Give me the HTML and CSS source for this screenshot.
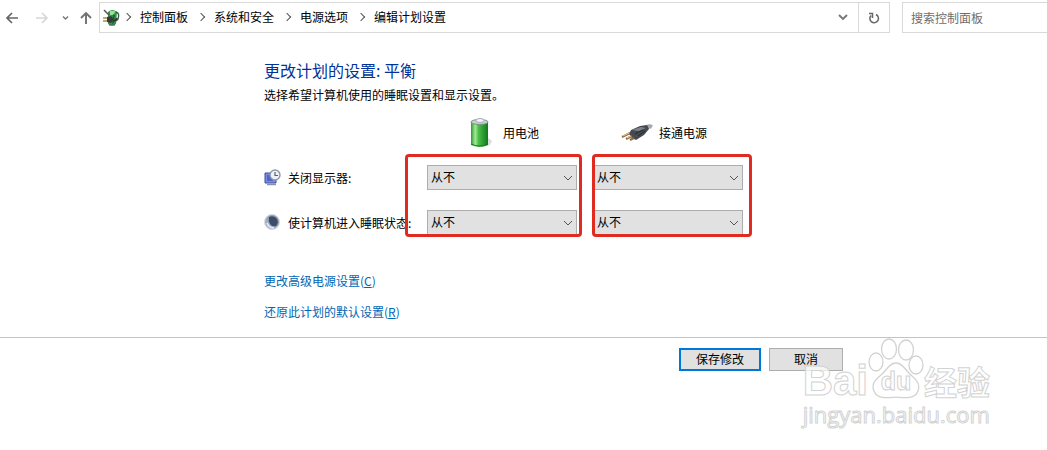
FILE: index.html
```html
<!DOCTYPE html>
<html lang="zh-CN">
<head>
    <meta charset="UTF-8">
    <meta name="viewport" content="width=device-width, initial-scale=1.0">
    <title>编辑计划设置</title>
    <link rel="stylesheet" href="styles.css">
</head>
<body>
    <header class="toolbar">
        <nav class="history">
            <button type="button" aria-label="后退">
                <svg width="14" height="14" viewBox="0 0 14 14"><path d="M13 7H2M7 2L2 7l5 5" fill="none" stroke="#666" stroke-width="1.7"/></svg>
            </button>
            <button type="button" class="forward" aria-label="前进">
                <svg width="14" height="14" viewBox="0 0 14 14"><path d="M1 7h11M7 2l5 5-5 5" fill="none" stroke="#d6d6d6" stroke-width="1.6"/></svg>
            </button>
            <button type="button" class="recent" aria-label="最近位置">
                <svg width="7" height="6" viewBox="0 0 7 6"><path d="M1 1.5l2.5 2.5L6 1.5" fill="none" stroke="#777" stroke-width="1.4"/></svg>
            </button>
            <button type="button" class="up" aria-label="上移">
                <svg width="12" height="14" viewBox="0 0 12 14"><path d="M6 13V2M1 7l5-5 5 5" fill="none" stroke="#707070" stroke-width="1.9"/></svg>
            </button>
        </nav>

        <div class="address">
            <svg class="plan-icon" width="18" height="18" viewBox="0 0 18 18">
                <path d="M6 3q4-4 9 0l-1 12q-4 3-8 0z" fill="#2f9a45"/>
                <path d="M8 2h5l-1 4H8z" fill="#9be09d"/>
                <path d="M11 5l2 1-1 8-2 1z" fill="#176a30"/>
                <path d="M14 3q4 1 2 7l-2 2" fill="none" stroke="#3b5a45" stroke-width="1.4"/>
                <path d="M2 1l5 5" stroke="#555" stroke-width="1.5"/>
                <path d="M1 9h5M1 12h5" stroke="#a98a4c" stroke-width="1.5"/>
                <path d="M5 8l4-1 3 3-3 4-4-1z" fill="#383a3d"/>
                <path d="M11 12q3 0 4-3" fill="none" stroke="#333" stroke-width="1.5"/>
                <path d="M7 16h6" stroke="#555"/>
            </svg>
            <ol class="crumbs">
                <li><a href="#">控制面板</a></li>
                <li><a href="#">系统和安全</a></li>
                <li><a href="#">电源选项</a></li>
                <li><a href="#">编辑计划设置</a></li>
            </ol>
            <button type="button" class="drop" aria-label="以前的位置">
                <svg width="10" height="7" viewBox="0 0 10 7"><path d="M1 1l4 4 4-4" fill="none" stroke="#777" stroke-width="1.9"/></svg>
            </button>
            <button type="button" class="refresh" aria-label="刷新">
                <svg width="12" height="12" viewBox="0 0 12 12"><path d="M8 2.5a4.300 4.300 0 1 1-5 1M1 1.500h3.500V6" fill="none" stroke="#666" stroke-width="1.5"/></svg>
            </button>
        </div>

        <input class="search" type="text" placeholder="搜索控制面板" aria-label="搜索控制面板">
    </header>

    <main>
        <h1>更改计划的设置: 平衡</h1>
        <p class="intro">选择希望计算机使用的睡眠设置和显示设置。</p>

        <div class="settings">
            <div class="source battery">
                <svg width="24" height="32" viewBox="0 0 24 32">
                    <defs>
                        <linearGradient id="cell" x1="0" x2="1">
                            <stop offset="0" stop-color="#2d9a31"/>
                            <stop offset=".25" stop-color="#a4e89a"/>
                            <stop offset=".45" stop-color="#48bd45"/>
                            <stop offset="1" stop-color="#0d7a1c"/>
                        </linearGradient>
                    </defs>
                    <path d="M18 20l5 4-2 4-8 2z" fill="#ddd"/>
                    <path d="M2 5v23q8 4 17 0V5z" fill="url(#cell)"/>
                    <ellipse cx="10.500" cy="5" rx="8.500" ry="2.500" fill="#c5d2cb" stroke="#79927e"/>
                    <ellipse cx="11" cy="3.500" rx="4" ry="2" fill="#f2f5fb" stroke="#a3aabd"/>
                    <path d="M2 27q8 4 17 0" fill="none" stroke="#187827"/>
                </svg>
                <span>用电池</span>
            </div>
            <div class="source plugged">
                <svg width="34" height="18" viewBox="0 0 34 18">
                    <path d="M25 5q3-4 7-2" fill="none" stroke="#a5a8ad" stroke-width="4"/>
                    <path d="M11 6l9-4 7-1 2 4-5 6-8 5-4-2-3-4z" fill="#454950"/>
                    <path d="M12 6l9-3 5 1-7 3z" fill="#7d828b"/>
                    <path d="M15 10l8-4M18 12l7-5" stroke="#25282d"/>
                    <path d="M2 13l8-4M6 15l6-3M10 16l4-2" stroke="#8d6840" stroke-width="2"/>
                    <path d="M3 12l6-3M7 14l4-2" stroke="#f1cf9b"/>
                </svg>
                <span>接通电源</span>
            </div>

            <div class="name">
                <svg width="17" height="17" viewBox="0 0 17 17">
                    <path d="M1 4h11v10H1z" fill="#7c8fdd" stroke="#3d4da5"/>
                    <path d="M3 6h6v6H3z" fill="#5366c5"/>
                    <path d="M3 15.500h9" stroke="#8b91a8" stroke-width="1.500"/>
                    <circle cx="11" cy="6" r="5" fill="#eef2f7" stroke="#8d97a7" stroke-width="1.400"/>
                    <path d="M11 3v3.500h3" fill="none" stroke="#55607a" stroke-width="1.200"/>
                </svg>
                <span id="display">关闭显示器:</span>
            </div>
            <div class="pick">
                <select aria-labelledby="display"><option>从不</option></select>
                <svg width="10" height="6" viewBox="0 0 10 6"><path d="M1 1l4 4 4-4" fill="none" stroke="#555"/></svg>
            </div>
            <div class="pick">
                <select aria-labelledby="display"><option>从不</option></select>
                <svg width="10" height="6" viewBox="0 0 10 6"><path d="M1 1l4 4 4-4" fill="none" stroke="#555"/></svg>
            </div>

            <div class="name">
                <svg width="17" height="17" viewBox="0 0 17 17">
                    <defs>
                        <linearGradient id="moon" x1="0" y1="1" x2="1" y2="0">
                            <stop offset="0" stop-color="#aebfd2"/>
                            <stop offset="1" stop-color="#7f8fa8"/>
                        </linearGradient>
                    </defs>
                    <circle cx="8" cy="8" r="7.500" fill="url(#moon)" stroke="#d5dae2"/>
                    <path d="M5 3q5-2 8 2 2 4-1 7-4 1-6-2-2-3-1-7z" fill="#3d4d68"/>
                    <path d="M3 9q2 5 7 5" fill="none" stroke="#e9eff6" stroke-width="1.500"/>
                </svg>
                <span id="sleep">使计算机进入睡眠状态:</span>
            </div>
            <div class="pick">
                <select aria-labelledby="sleep"><option>从不</option></select>
                <svg width="10" height="6" viewBox="0 0 10 6"><path d="M1 1l4 4 4-4" fill="none" stroke="#555"/></svg>
            </div>
            <div class="pick">
                <select aria-labelledby="sleep"><option>从不</option></select>
                <svg width="10" height="6" viewBox="0 0 10 6"><path d="M1 1l4 4 4-4" fill="none" stroke="#555"/></svg>
            </div>

            <div class="mark mark-battery"></div>
            <div class="mark mark-plugged"></div>
        </div>

        <ul class="links">
            <li><a href="#">更改高级电源设置(<u>C</u>)</a></li>
            <li><a href="#">还原此计划的默认设置(<u>R</u>)</a></li>
        </ul>
    </main>

    <footer>
        <button type="button" class="save">保存修改</button>
        <button type="button" class="cancel">取消</button>

        <div class="watermark">
            <div class="brand">
                <span class="bai">Bai</span>
                <span class="paw">
                    <svg width="56" height="62" viewBox="0 0 56 62">
                        <g fill="#fff" fill-opacity=".7" stroke="#d2d2d2" stroke-width="1.3">
                            <ellipse cx="8" cy="24" rx="7" ry="9"/>
                            <ellipse cx="21" cy="11" rx="7.500" ry="10"/>
                            <ellipse cx="38" cy="12" rx="7.500" ry="10"/>
                            <ellipse cx="48" cy="27" rx="7" ry="9"/>
                            <path d="M28 25c7 0 9 7 15 12 6 5 10 10 7 16-3 8-12 7-22 6-10 1-19 2-22-6-3-7 1-11 7-16 6-5 8-12 15-12z"/>
                        </g>
                    </svg>
                    <span class="du">du</span>
                </span>
                <span class="jingyan">经验</span>
            </div>
            <div class="site">jingyan.baidu.com</div>
        </div>
    </footer>
</body>
</html>
```
FILE: styles.css
```css
* {
    box-sizing: border-box;
}
body {
    margin: 0;
    background: #fff;
    color: #000;
    font-family: "Noto Sans CJK SC", sans-serif;
    font-size: 12px;
    line-height: 16px;
    overflow-x: hidden;
}
button, input, select {
    font: inherit;
    color: inherit;
}
svg {
    display: block;
    flex: none;
}
ul, ol {
    list-style: none;
    margin: 0;
    padding: 0;
}

/* toolbar */
.toolbar {
    display: flex;
    padding-top: 2px;
}
.history {
    display: flex;
    align-items: center;
    width: 99px;
    padding-left: 5px;
}
.history button, .address button {
    display: flex;
    align-items: center;
    justify-content: center;
    padding: 0;
    border: none;
    background: none;
}
.forward {
    margin-left: 16px;
}
.recent {
    margin-left: 13px;
}
.up {
    margin-left: 11px;
}
.address {
    display: flex;
    align-items: center;
    flex: 1;
    height: 31px;
    border: 1px solid #d9d9d9;
}
.plan-icon {
    margin: 0 4px 0 2px;
}
.crumbs {
    display: flex;
    flex: 1;
    padding-bottom: 2px;
}
.crumbs li {
    display: flex;
    align-items: center;
    margin-right: 10px;
}
.crumbs li::before {
    content: "";
    width: 5px;
    height: 5px;
    margin-right: 10px;
    border-top: 1px solid #555;
    border-right: 1px solid #555;
    transform: rotate(45deg);
}
.crumbs a {
    color: #000;
    text-decoration: none;
}
.address .drop {
    width: 30px;
    height: 29px;
}
.address .refresh {
    width: 31px;
    height: 29px;
    border-left: 1px solid #d9d9d9;
}
.search {
    width: 145px;
    margin-left: 12px;
    padding: 0 8px;
    border: 1px solid #d9d9d9;
    border-right: none;
    border-radius: 0;
}
.search::placeholder {
    color: #6d6d6d;
}

/* plan settings */
main {
    padding: 26px 0 17px 264px;
}
h1 {
    margin: 0;
    color: #003399;
    font-size: 16px;
    font-weight: normal;
    line-height: 22px;
}
.intro {
    margin: 6px 0 18px;
}
.settings {
    position: relative;
    display: grid;
    grid-template-columns: 147px 150px 150px;
    grid-template-rows: 24px 25px 25px;
    gap: 20px 16px;
    width: max-content;
    margin-bottom: 38px;
}
.source {
    display: flex;
    align-items: center;
}
.battery {
    grid-column: 2;
    padding-left: 42px;
    gap: 10px;
}
.plugged {
    padding-left: 27px;
    gap: 5px;
}
.name {
    display: flex;
    align-items: center;
    gap: 7px;
    white-space: nowrap;
}
.pick {
    display: grid;
    align-items: center;
}
.pick select, .pick svg {
    grid-area: 1 / 1;
}
.pick select {
    width: 100%;
    height: 25px;
    padding: 0 3px 1px;
    border: 1px solid #adadad;
    border-radius: 0;
    background: #e1e1e1;
    appearance: none;
}
.pick svg {
    justify-self: end;
    margin-right: 4px;
    pointer-events: none;
}
/* red frames round each column of drop-downs */
.mark {
    position: absolute;
    top: 33px;
    bottom: -2px;
    border: 3px solid #e02b20;
    border-radius: 4px;
    pointer-events: none;
}
.mark-battery {
    left: 141px;
    width: 177px;
}
.mark-plugged {
    right: -9px;
    width: 160px;
}
.links li + li {
    margin-top: 15px;
}
.links a {
    color: #0066b4;
    text-decoration: none;
}

/* buttons */
footer {
    position: relative;
    display: flex;
    justify-content: flex-end;
    align-items: flex-start;
    gap: 8px;
    min-height: 94px;
    padding: 10px 204px 0 0;
    border-top: 1px solid #c4c4c4;
}
footer button {
    height: 23px;
    padding: 0 0 1px;
    border: 1px solid #adadad;
    background: #e1e1e1;
}
.save {
    width: 82px;
}
footer .save {
    border: 2px solid #0078d7;
}
.cancel {
    width: 74px;
}

/* watermark */
.watermark {
    position: absolute;
    top: 0;
    right: 57px;
    color: rgba(255, 255, 255, 0.7);
    -webkit-text-stroke: 1px #d2d2d2;
    pointer-events: none;
}
.brand {
    display: flex;
    align-items: flex-end;
    height: 62px;
}
.bai {
    font: bold 42px/38px "Liberation Sans", sans-serif;
}
.paw {
    display: grid;
    justify-items: center;
    align-items: end;
}
.paw svg, .du {
    grid-area: 1 / 1;
}
.du {
    padding-bottom: 4px;
    font: bold 25px/30px "Liberation Sans", sans-serif;
}
.jingyan {
    font-size: 33px;
    font-weight: bold;
    line-height: 38px;
}
.site {
    font: 22px/28px "Open Sans", sans-serif;
}
```
